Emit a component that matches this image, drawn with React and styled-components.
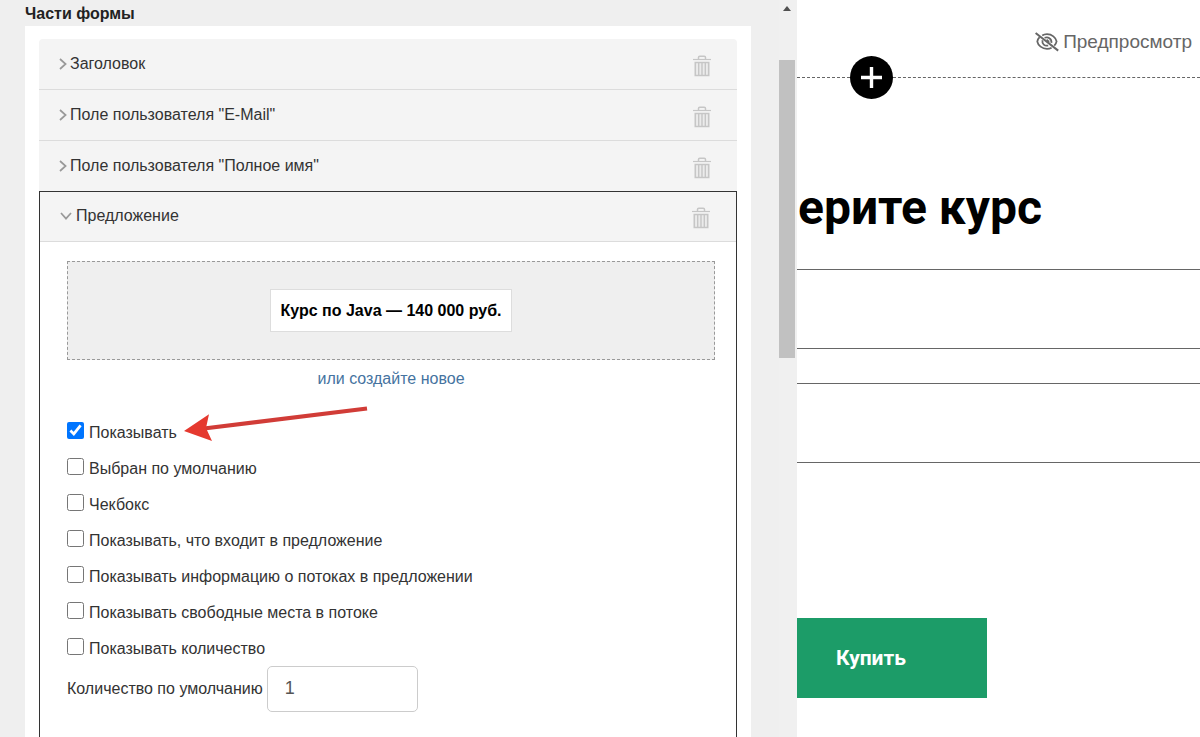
import React, { useState } from "react";
import styled, { createGlobalStyle } from "styled-components";

const closedParts = [
  "Заголовок",
  'Поле пользователя "E-Mail"',
  'Поле пользователя "Полное имя"',
];

const optionData = [
  { id: "show", text: "Показывать", checked: true, arrow: true },
  { id: "default", text: "Выбран по умолчанию" },
  { id: "checkbox", text: "Чекбокс" },
  { id: "contents", text: "Показывать, что входит в предложение" },
  { id: "streams", text: "Показывать информацию о потоках в предложении" },
  { id: "places", text: "Показывать свободные места в потоке" },
  { id: "amount", text: "Показывать количество" },
];

const GlobalStyle = createGlobalStyle`
  *, *::before, *::after {
    box-sizing: border-box;
  }
  body {
    margin: 0;
    background: #ffffff;
    font-family: "Liberation Sans", Arial, sans-serif;
    font-size: 16px;
    line-height: 20px;
    color: #333333;
  }
`;

const Page = styled.div`
  display: grid;
  grid-template-columns: 797fr 403fr;
  height: 100vh;
  overflow: hidden;
`;

const Editor = styled.aside`
  display: flex;
  min-width: 0;
  background: #efefef;
`;

const EditorContent = styled.div`
  flex: 1;
  min-width: 0;
  padding: 4px 28px 0 25px;
`;

const EditorTitle = styled.h2`
  margin: 0 0 2px;
  font-size: 16px;
  line-height: 20px;
  font-weight: 700;
  color: #222222;
`;

const PartsPanel = styled.div`
  min-height: 100vh;
  padding: 13px 14px;
  background: #ffffff;
`;

const Scrollbar = styled.div`
  flex: 0 0 18px;
  display: flex;
  flex-direction: column;
  padding: 6px 2px 0 0;
  background: #f0f0f0;
`;

const ScrollArrow = styled.svg`
  align-self: center;
  width: 8px;
  height: 5px;
  margin-bottom: 49px;
`;

const ScrollThumb = styled.div`
  height: 298px;
  background: #c1c1c1;
`;

const PartRow = styled.div`
  display: flex;
  align-items: center;
  justify-content: space-between;
  height: 51px;
  padding: 0 26px 1px 20px;
  background: #f4f4f4;
  border-bottom: 1px solid #dcdcdc;

  &:first-child {
    border-radius: 4px 4px 0 0;
  }
  &:nth-child(3) {
    height: 50px;
    border-bottom: 0;
  }
`;

const OpenPart = styled.section`
  min-height: 100vh;
  border: 1px solid #333333;
  background: #ffffff;

  ${PartRow} {
    height: 50px;
    border-radius: 0;
  }
`;

const PartToggle = styled.button`
  display: flex;
  align-items: center;
  gap: ${(props) => (props.$open ? 4 : 3)}px;
  padding: 0;
  border: 0;
  background: none;
  font: inherit;
  color: #333333;
  cursor: pointer;
`;

const DeleteButton = styled.button`
  display: flex;
  padding: 4px 0 0;
  border: 0;
  background: none;
  cursor: pointer;
`;

const PartBody = styled.div`
  padding: 19px 21px 20px 27px;
`;

const OfferBox = styled.div`
  display: flex;
  align-items: center;
  justify-content: center;
  height: 99px;
  background: #efefef;
  border: 1px dashed #999999;
`;

const OfferButton = styled.button`
  height: 43px;
  padding: 0 9px;
  border: 1px solid #dddddd;
  background: #ffffff;
  font: inherit;
  font-weight: 700;
  color: #000000;
  cursor: pointer;
`;

const CreateLine = styled.div`
  margin: 9px 0 33px;
  text-align: center;
`;

const CreateLink = styled.a`
  color: #4573a0;
  text-decoration: none;
  &:hover {
    text-decoration: underline;
  }
`;

const OptionLabel = styled.label`
  position: relative;
  display: flex;
  align-items: flex-start;
  gap: 5px;
  width: fit-content;
  height: 36px;
`;

const OptionCheck = styled.input`
  width: 17px;
  height: 17px;
  margin: 0;
  accent-color: #0075ff;
`;

const OptionText = styled.span`
  padding-top: 1px;
`;

const ArrowMark = styled.svg`
  position: absolute;
  left: 100%;
  bottom: 16px;
  width: 192px;
  height: 36px;
  margin-left: 7px;
  pointer-events: none;
`;

const AmountLabel = styled.label`
  display: flex;
  align-items: center;
  gap: 4px;
  margin-top: -8px;
`;

const AmountInput = styled.input`
  width: 151px;
  height: 46px;
  padding: 0 17px 2px;
  border: 1px solid #cccccc;
  border-radius: 5px;
  background: #ffffff;
  font-family: inherit;
  font-size: 18px;
  color: #555555;
`;

const Preview = styled.main`
  display: flex;
  flex-direction: column;
  align-items: flex-start;
  min-width: 0;
  overflow: hidden;
  background: #ffffff;
`;

const PreviewButton = styled.button`
  display: flex;
  align-items: center;
  align-self: flex-end;
  gap: 4px;
  height: 56px;
  padding: 28px 8px 0 0;
  border: 0;
  background: none;
  font-family: inherit;
  font-size: 19px;
  line-height: 28px;
  color: #666666;
  cursor: pointer;
`;

const AddLine = styled.div`
  display: flex;
  align-items: center;
  width: 100%;

  &::before,
  &::after {
    content: "";
    border-top: 1px dashed #666666;
  }
  &::before {
    flex: 0 0 53px;
  }
  &::after {
    flex: 1;
  }
`;

const AddButton = styled.button`
  display: flex;
  align-items: center;
  justify-content: center;
  width: 43px;
  height: 43px;
  padding: 0;
  border: 0;
  border-radius: 50%;
  background: #000000;
  cursor: pointer;
`;

const PreviewTitle = styled.h1`
  margin: 79px 0 31px;
  padding-left: 1px;
  font-family: Roboto, sans-serif;
  font-size: 48px;
  line-height: 60px;
  font-weight: 700;
  white-space: nowrap;
  color: #000000;
`;

const Field = styled.input`
  width: 100%;
  height: 80px;
  margin-bottom: 34px;
  padding: 0 20px;
  border: 1px solid #666666;
  border-width: 1px 0;
  border-radius: 0;
  background: #ffffff;
  font: inherit;
`;

const BuyButton = styled.button`
  width: 190px;
  height: 80px;
  margin-top: 121px;
  padding: 0 39px;
  border: 0;
  background: #1c9c68;
  font-family: Roboto, sans-serif;
  font-size: 21px;
  font-weight: 700;
  text-align: left;
  color: #ffffff;
  cursor: pointer;
`;

function ChevronRight() {
  return (
    <svg width="8" height="12" viewBox="0 0 8 12" fill="none" aria-hidden="true">
      <path d="M1 1l5.6 5L1 11" stroke="#999999" strokeWidth="1.7" />
    </svg>
  );
}

function ChevronDown() {
  return (
    <svg width="12" height="8" viewBox="0 0 12 8" fill="none" aria-hidden="true">
      <path d="M1 1l5 5.6L11 1" stroke="#999999" strokeWidth="1.7" />
    </svg>
  );
}

function TrashIcon() {
  return (
    <svg
      width="18"
      height="22"
      viewBox="0 0 18 22"
      fill="none"
      stroke="#c6c6c6"
      aria-hidden="true"
    >
      <path d="M0 4.5h18" strokeWidth="1.2" />
      <path d="M5.5 4V2.6Q5.5 1.2 6.8 1.2h4.4q1.3 0 1.3 1.4V4" strokeWidth="1.5" />
      <path d="M2.3 7.5h13.4v13H2.3z" fill="#ebebeb" strokeWidth="1.6" />
      <path d="M5.7 8v12M9 8v12M12.3 8v12" strokeWidth="1.4" />
    </svg>
  );
}

function EyeOffIcon() {
  return (
    <svg
      width="24"
      height="20"
      viewBox="0 0 24 20"
      fill="none"
      stroke="#666666"
      strokeWidth="1.8"
      aria-hidden="true"
    >
      <path d="M7.2 3.6Q9.2 2.2 12 2.2c5 0 8.8 3.4 9.6 7.2-.3 1.6-1.1 3-2.3 4.2" />
      <path d="M4.6 5.2C3.4 6.4 2.6 7.9 2.3 9.6c.8 3.9 4.7 7.2 9.7 7.2 1.7 0 3.3-.4 4.6-1.1" />
      <path d="M9.6 5.8c3.3-1.5 7.3.8 6.8 5M7.5 8.2c-.8 3.7 2.3 6.2 5.7 5.3" />
      <path d="M12 7.5c.2 1.300 1 2 2.400 2" />
      <path d="M.6 1l22.6 17.6" strokeWidth="2" />
    </svg>
  );
}

function PartHeader(props) {
  return (
    <PartRow>
      <PartToggle type="button" $open={props.open} aria-expanded={!!props.open}>
        {props.open ? <ChevronDown /> : <ChevronRight />}
        {props.title}
      </PartToggle>
      <DeleteButton type="button" aria-label="Удалить">
        <TrashIcon />
      </DeleteButton>
    </PartRow>
  );
}

function Option(props) {
  const [checked, setChecked] = useState(!!props.option.checked);
  return (
    <OptionLabel htmlFor={props.option.id}>
      <OptionCheck
        id={props.option.id}
        type="checkbox"
        checked={checked}
        onChange={() => setChecked(!checked)}
      />
      <OptionText>{props.option.text}</OptionText>
      {props.option.arrow && (
        <ArrowMark viewBox="0 0 192 36" aria-hidden="true">
          <path d="M20 22.5L183 2.5" stroke="#d13c37" strokeWidth="4" />
          <path d="M0 25L25 8.3l-3 13.6L28 35z" fill="#e5392f" />
        </ArrowMark>
      )}
    </OptionLabel>
  );
}

function OfferSettings() {
  return (
    <PartBody>
      <OfferBox>
        <OfferButton type="button">Курс по Java — 140 000 руб.</OfferButton>
      </OfferBox>
      <CreateLine>
        <CreateLink href="#new">или создайте новое</CreateLink>
      </CreateLine>
      {optionData.map((option) => (
        <Option key={option.id} option={option} />
      ))}
      <AmountLabel htmlFor="quantity">
        Количество по умолчанию
        <AmountInput id="quantity" type="text" defaultValue="1" />
      </AmountLabel>
    </PartBody>
  );
}

function FormEditor() {
  return (
    <Editor>
      <EditorContent>
        <EditorTitle>Части формы</EditorTitle>
        <PartsPanel>
          {closedParts.map((title) => (
            <PartHeader key={title} title={title} />
          ))}
          <OpenPart>
            <PartHeader title="Предложение" open />
            <OfferSettings />
          </OpenPart>
        </PartsPanel>
      </EditorContent>
      <Scrollbar>
        <ScrollArrow viewBox="0 0 8 5" aria-hidden="true">
          <path d="M0 5l4-5 4 5z" fill="#505050" />
        </ScrollArrow>
        <ScrollThumb />
      </Scrollbar>
    </Editor>
  );
}

function FormPreview() {
  return (
    <Preview>
      <PreviewButton type="button">
        <EyeOffIcon />
        Предпросмотр
      </PreviewButton>
      <AddLine>
        <AddButton type="button" aria-label="Добавить">
          <svg width="21" height="21" viewBox="0 0 21 21" aria-hidden="true">
            <path d="M10.5 0v21M0 10.5h21" stroke="#ffffff" strokeWidth="3.4" />
          </svg>
        </AddButton>
      </AddLine>
      <PreviewTitle>ерите курс</PreviewTitle>
      <Field type="email" aria-label="E-Mail" />
      <Field type="text" aria-label="Полное имя" />
      <BuyButton type="button">Купить</BuyButton>
    </Preview>
  );
}

export default function App() {
  return (
    <>
      <GlobalStyle />
      <Page>
        <FormEditor />
        <FormPreview />
      </Page>
    </>
  );
}
